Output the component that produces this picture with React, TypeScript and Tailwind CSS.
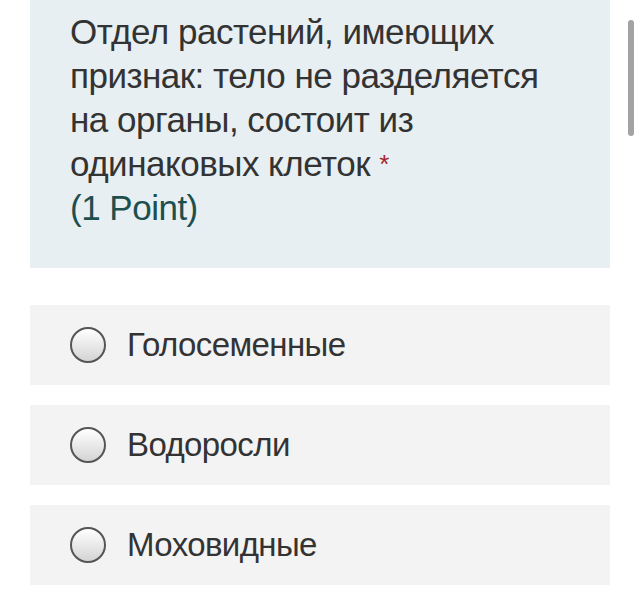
import React from "react";

const options = ["Голосеменные", "Водоросли", "Моховидные"];

const Radio: React.FC = () => (
  <span className="inline-block w-[36px] h-[36px] rounded-full border-2 border-[#555] bg-gradient-to-b from-[#ffffff] to-[#d4d4d4] shrink-0" />
);

const App: React.FC = () => {
  return (
    <div
      className="relative w-[640px] h-[596px] bg-white overflow-hidden"
      style={{ fontFamily: '"Liberation Sans", Arial, sans-serif' }}
    >
      {/* Question */}
      <div className="mx-[30px] bg-[#e8eff2] pl-[40px] pr-[20px] pt-[10px] pb-[38px]">
        <div className="text-[35px] leading-[44px] tracking-[-0.5px] text-[#333333] whitespace-nowrap">
          Отдел растений, имеющих
          <br />
          признак: тело не разделяется
          <br />
          на органы, состоит из
          <br />
          одинаковых клеток{" "}
          <span className="text-[#a4262c] text-[26px] align-top">*</span>
        </div>
        <div className="text-[35px] leading-[44px] tracking-[-0.5px] text-[#1d4f4f]">(1 Point)</div>
      </div>

      {/* Options */}
      <div className="mx-[30px] mt-[37px] flex flex-col gap-[20px]">
        {options.map((o) => (
          <div key={o} className="h-[80px] bg-[#f3f3f3] flex items-center pl-[40px] gap-[21px]">
            <Radio />
            <span className="text-[33px] tracking-[-0.6px] text-[#333333]">{o}</span>
          </div>
        ))}
      </div>

      {/* Scrollbar */}
      <div className="absolute left-[628px] top-[20px] w-[6px] h-[116px] rounded-full bg-[#a3a3a3]" />
    </div>
  );
};

export default App;
